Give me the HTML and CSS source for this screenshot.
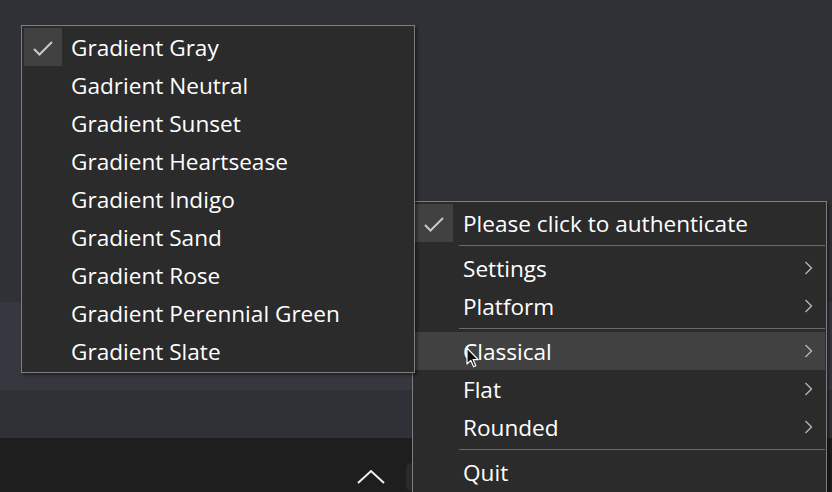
FILE: index.html
```html
<!DOCTYPE html>
<html lang="en">
<head>
    <meta charset="UTF-8">
    <title>Tray menu</title>
    <link rel="stylesheet" href="styles.css">
</head>
<body>
    <div class="desktop">
        <div class="band band-top"></div>
        <div class="band band-mid"></div>
        <div class="band band-low"></div>
        <div class="taskbar">
            <svg class="tray-up" width="28" height="16" viewBox="0 0 28 16">
                <path d="M1 14 L14 2 L27 14" fill="none" stroke="#f2f2f2" stroke-width="2"/>
            </svg>
            <div class="tray-chip"></div>
        </div>
    </div>

    <!-- main tray menu -->
    <div class="menu menu-main">
        <div class="item checked">
            <span class="check"><svg width="38" height="38" viewBox="0 0 38 38"><path d="M10 21 L15.5 26.5 L28 14" fill="none" stroke="#c9c9c9" stroke-width="2"/></svg></span>
            <span class="label">Please click to authenticate</span>
        </div>
        <div class="sep"></div>
        <div class="item">
            <span class="check"></span>
            <span class="label">Settings</span>
            <span class="arrow"><svg width="9" height="14" viewBox="0 0 9 14"><path d="M1.5 1 L7.5 7 L1.5 13" fill="none" stroke="#b5b5b5" stroke-width="1.4"/></svg></span>
        </div>
        <div class="item">
            <span class="check"></span>
            <span class="label">Platform</span>
            <span class="arrow"><svg width="9" height="14" viewBox="0 0 9 14"><path d="M1.5 1 L7.5 7 L1.5 13" fill="none" stroke="#b5b5b5" stroke-width="1.4"/></svg></span>
        </div>
        <div class="sep"></div>
        <div class="item hover">
            <span class="check"></span>
            <span class="label">Classical</span>
            <span class="arrow"><svg width="9" height="14" viewBox="0 0 9 14"><path d="M1.5 1 L7.5 7 L1.5 13" fill="none" stroke="#b5b5b5" stroke-width="1.4"/></svg></span>
        </div>
        <div class="item">
            <span class="check"></span>
            <span class="label">Flat</span>
            <span class="arrow"><svg width="9" height="14" viewBox="0 0 9 14"><path d="M1.5 1 L7.5 7 L1.5 13" fill="none" stroke="#b5b5b5" stroke-width="1.4"/></svg></span>
        </div>
        <div class="item">
            <span class="check"></span>
            <span class="label">Rounded</span>
            <span class="arrow"><svg width="9" height="14" viewBox="0 0 9 14"><path d="M1.5 1 L7.5 7 L1.5 13" fill="none" stroke="#b5b5b5" stroke-width="1.4"/></svg></span>
        </div>
        <div class="sep"></div>
        <div class="item">
            <span class="check"></span>
            <span class="label">Quit</span>
        </div>
    </div>

    <!-- theme submenu -->
    <div class="menu menu-sub">
        <div class="item checked">
            <span class="check"><svg width="38" height="38" viewBox="0 0 38 38"><path d="M10 21 L15.5 26.5 L28 14" fill="none" stroke="#c9c9c9" stroke-width="2"/></svg></span>
            <span class="label">Gradient Gray</span>
        </div>
        <div class="item"><span class="check"></span><span class="label">Gadrient Neutral</span></div>
        <div class="item"><span class="check"></span><span class="label">Gradient Sunset</span></div>
        <div class="item"><span class="check"></span><span class="label">Gradient Heartsease</span></div>
        <div class="item"><span class="check"></span><span class="label">Gradient Indigo</span></div>
        <div class="item"><span class="check"></span><span class="label">Gradient Sand</span></div>
        <div class="item"><span class="check"></span><span class="label">Gradient Rose</span></div>
        <div class="item"><span class="check"></span><span class="label">Gradient Perennial Green</span></div>
        <div class="item"><span class="check"></span><span class="label">Gradient Slate</span></div>
    </div>

    <svg class="cursor" width="14" height="22" viewBox="0 0 14 22">
        <path d="M1 1 L1 17 L4.8 13.4 L7.6 19.8 L9.8 18.8 L7.1 12.6 L12.2 12.6 Z" fill="#111" stroke="#fff" stroke-width="1.2" stroke-linejoin="round"/>
    </svg>
</body>
</html>
```

FILE: styles.css
```css
body {
    margin: 0;
    padding: 0;
    width: 832px;
    height: 492px;
    overflow: hidden;
    position: relative;
    font-family: "Open Sans", "Noto Sans", sans-serif;
    background-color: #2f3035;
}
.desktop {
    display: flex;
    flex-direction: column;
    height: 492px;
}
.band-top {
    height: 302px;
    background-color: #303137;
}
.band-mid {
    height: 88px;
    background-color: #37383f;
}
.band-low {
    height: 48px;
    background-color: #303137;
}
.taskbar {
    flex: 1;
    background-color: #1e1e1e;
    display: flex;
    align-items: flex-start;
    padding: 31px 0 0 357px;
    gap: 21px;
}
.tray-chip {
    width: 12px;
    height: 28px;
    margin-top: -6px;
    border-radius: 5px 0 0 5px;
    background-color: #2a2a2a;
}
.menu {
    position: absolute;
    background-color: #2b2b2b;
    border: 1px solid #7f7f7f;
    box-sizing: border-box;
    box-shadow: 2px 2px 3px rgba(0, 0, 0, 0.45);
    color: #ffffff;
    font-size: 22.6px;
}
.menu-main {
    left: 412px;
    top: 201px;
    width: 415px;
    height: 310px;
    padding: 2px 1px 0 2px;
}
.menu-main .label {
    padding-left: 10px;
}
.menu-sub {
    left: 21px;
    top: 25px;
    width: 394px;
    height: 348px;
    padding: 2px 3px 2px 2px;
}
.item {
    display: flex;
    align-items: center;
    height: 38px;
}
.item.hover {
    background-color: #414141;
}
.check {
    width: 38px;
    height: 38px;
    flex: none;
}
.checked .check {
    background-color: #414141;
}
.check svg {
    display: block;
}
.label {
    flex: 1;
    padding-left: 9px;
    padding-top: 2px;
    line-height: 36px;
    white-space: nowrap;
}
.arrow {
    width: 9px;
    height: 14px;
    margin-right: 12px;
}
.arrow svg {
    display: block;
}
.sep {
    height: 7px;
    margin-left: 44px;
    display: flex;
    align-items: center;
}
.sep::before {
    content: "";
    flex: 1;
    height: 1px;
    background-color: #6b6b6b;
}
.cursor {
    position: absolute;
    left: 466px;
    top: 347px;
}
```
